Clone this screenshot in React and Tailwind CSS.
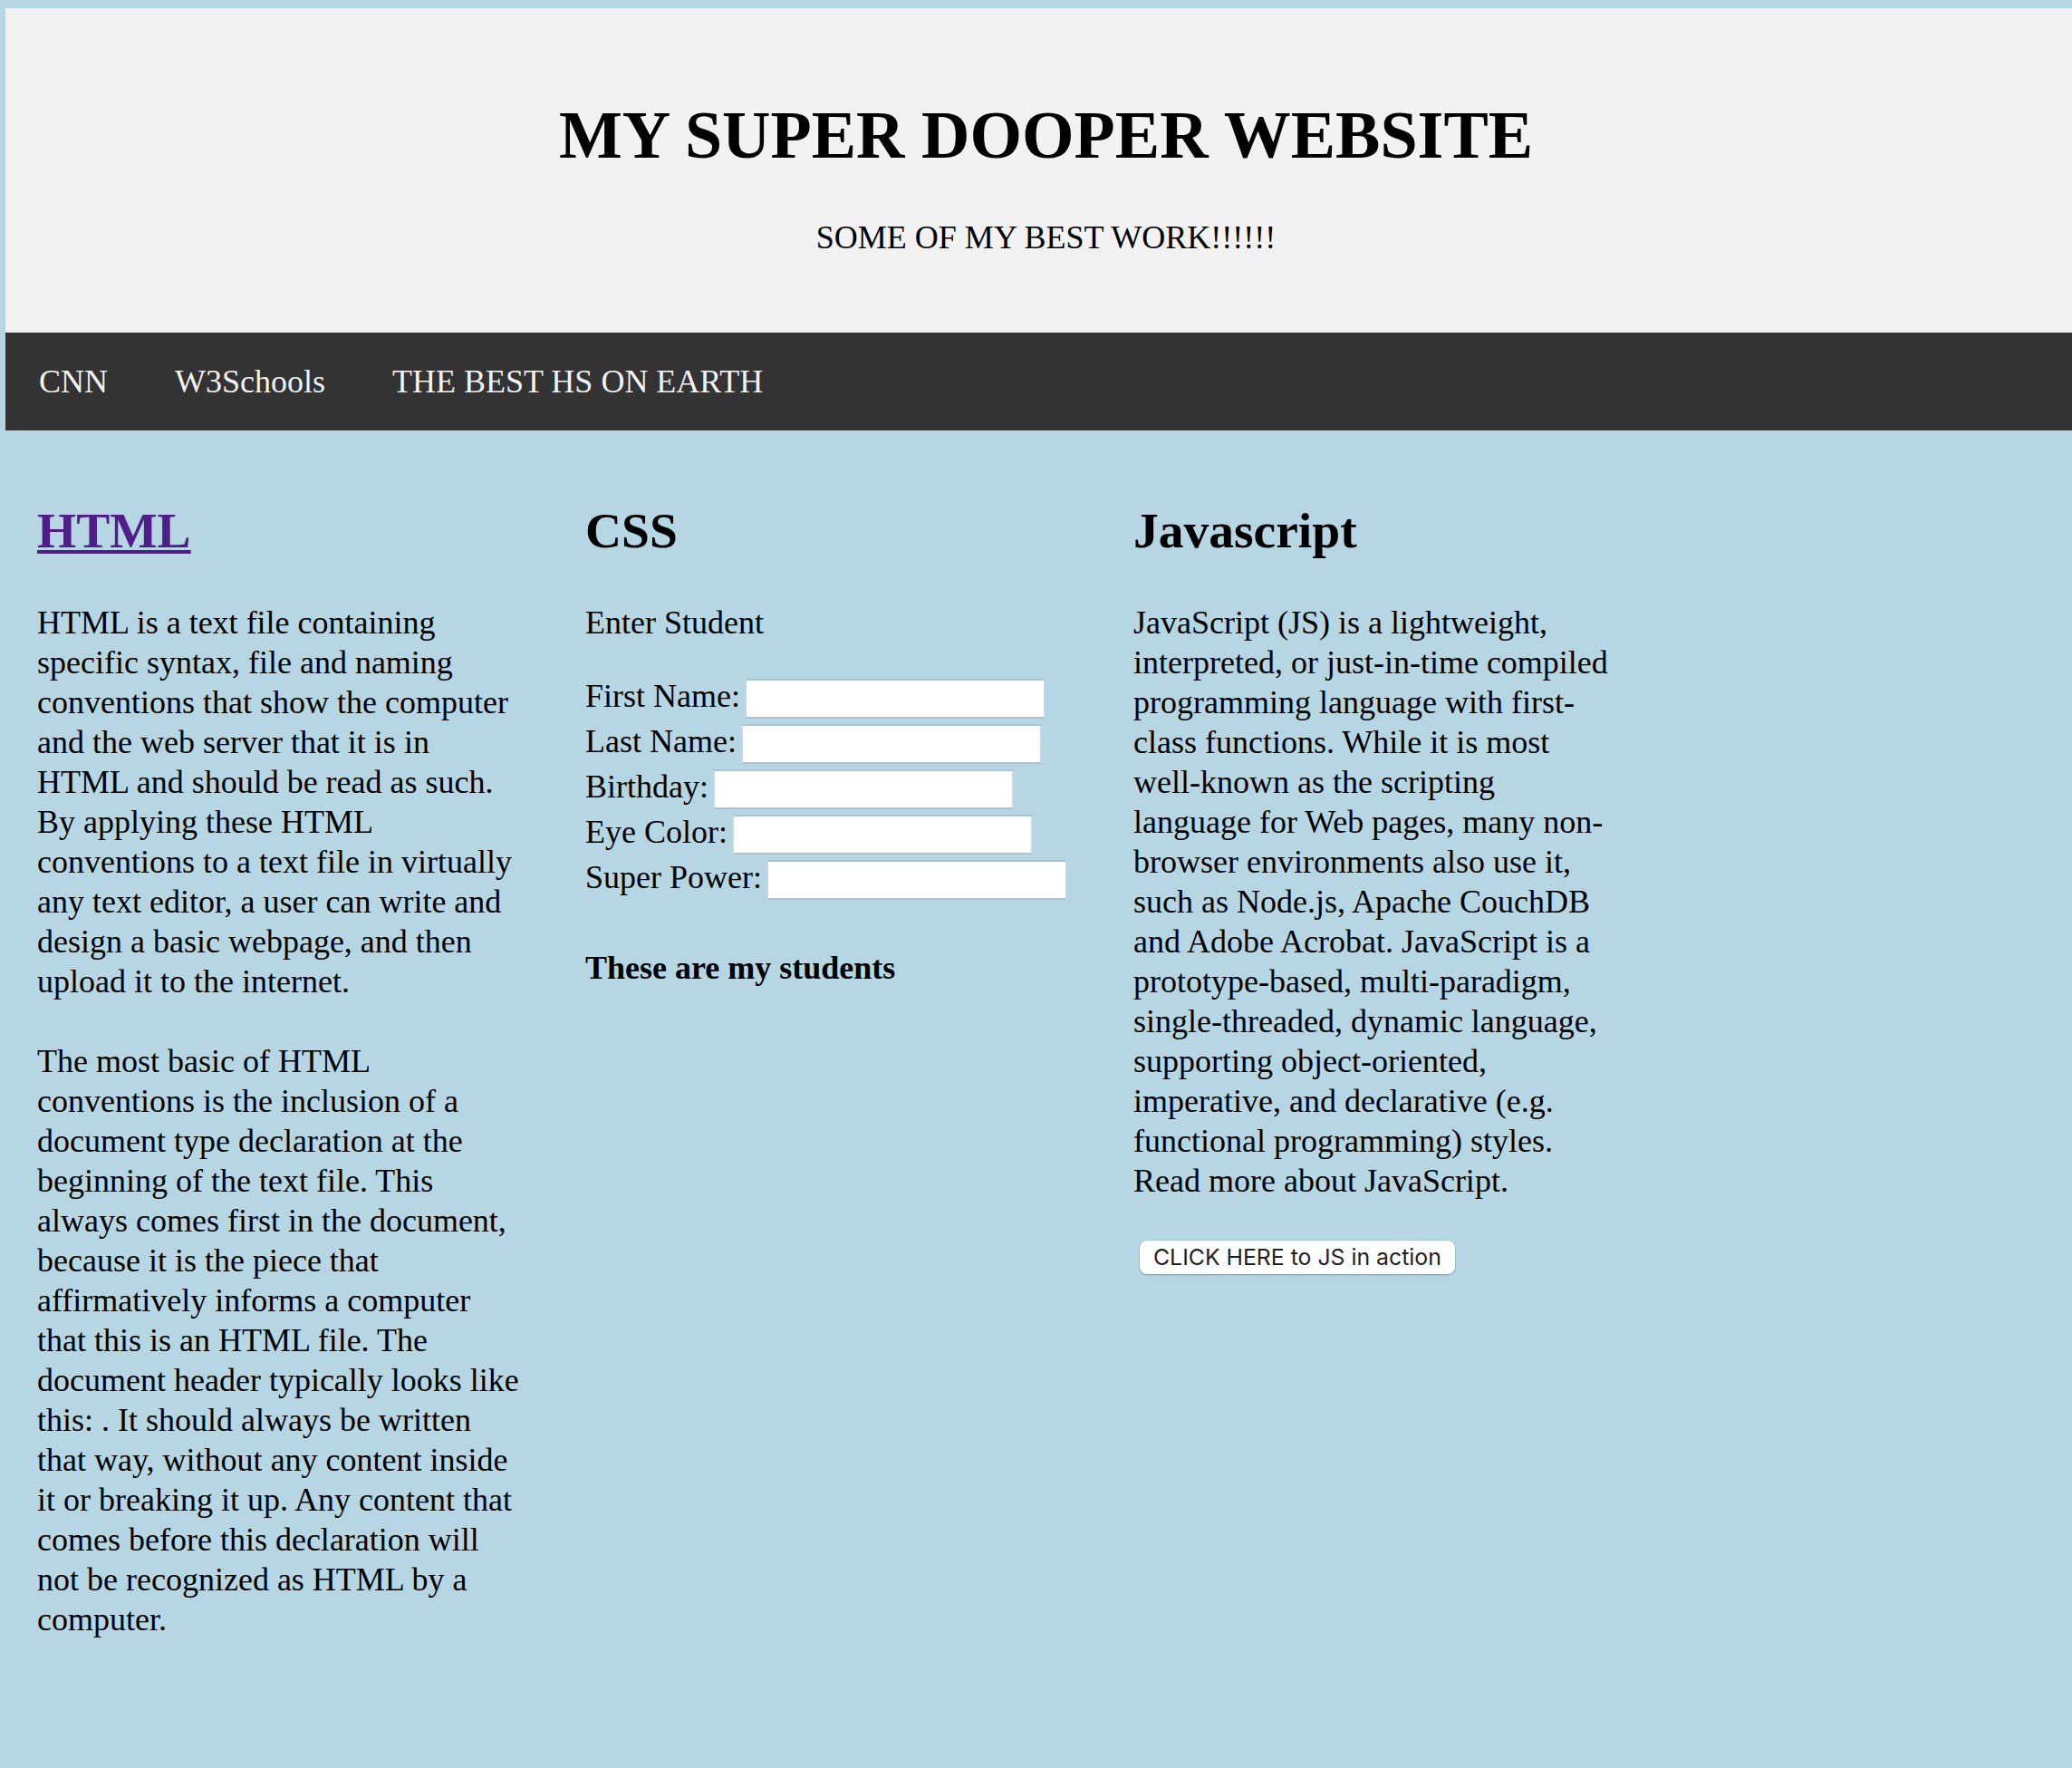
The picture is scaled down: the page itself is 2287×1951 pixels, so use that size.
const serif = "font-['Liberation_Serif','Times_New_Roman',serif]";

function Field({ label }) {
  return (
    <div className="flex items-start h-[50px]">
      <span className="leading-[50px] whitespace-nowrap">{label}</span>
      <input
        type="text"
        className="ml-[5px] mt-[6px] w-[332px] h-[44px] bg-white border-2 border-[#a9c3d1] border-x-[#c4d9e3] outline-none"
      />
    </div>
  );
}

export default function App() {
  return (
    <div className={`min-h-screen bg-[#b6d6e3] pt-[9px] pl-[6px] text-black ${serif}`}>
      {/* Header */}
      <header className="bg-[#f2f2f2] h-[358px] pt-[98px] pl-[16px] text-center">
        <h1 className="text-[74px] leading-[84px] font-bold">MY SUPER DOOPER WEBSITE</h1>
        <p className="mt-[49px] text-[36px] leading-[44px]">SOME OF MY BEST WORK!!!!!!</p>
      </header>

      {/* Nav */}
      <nav className="bg-[#333333] h-[108px] flex text-[#f2f2f2] text-[36px] leading-[108px]">
        <a href="#" className="px-[37px]">CNN</a>
        <a href="#" className="px-[37px]">W3Schools</a>
        <a href="#" className="px-[37px]">THE BEST HS ON EARTH</a>
      </nav>

      {/* Columns */}
      <main className="flex pt-[79px] pb-[40px] text-[36px] leading-[44px]">
        <section className="w-[605px] shrink-0 pl-[35px] pr-[35px]">
          <h2 className="text-[55.5px] leading-[64px] font-bold mb-[47px]">
            <a href="#" className="text-[#4f1e89] underline decoration-[4px] underline-offset-[3px]">HTML</a>
          </h2>
          <p>
            HTML is a text file containing specific syntax, file and naming conventions that show the computer and the web server that it is in HTML and should be read as such. By applying these HTML conventions to a text file in virtually any text editor, a user can write and design a basic webpage, and then upload it to the internet.
            <br />
            <br />
            The most basic of HTML conventions is the inclusion of a document type declaration at the beginning of the text file. This always comes first in the document, because it is the piece that affirmatively informs a computer that this is an HTML file. The document header typically looks like this: . It should always be written that way, without any content inside it or breaking it up. Any content that comes before this declaration will not be recognized as HTML by a computer.
          </p>
        </section>

        <section className="w-[605px] shrink-0 pl-[35px] pr-[35px]">
          <h2 className="text-[55.5px] leading-[64px] font-bold mb-[47px]">CSS</h2>
          <p>Enter Student</p>
          <form className="mt-[34px]">
            <Field label="First Name:" />
            <Field label="Last Name:" />
            <Field label="Birthday:" />
            <Field label="Eye Color:" />
            <Field label="Super Power:" />
          </form>
          <h4 className="mt-[53px] font-bold">These are my students</h4>
        </section>

        <section className="w-[605px] shrink-0 pl-[35px] pr-[35px]">
          <h2 className="text-[55.5px] leading-[64px] font-bold mb-[47px]">Javascript</h2>
          <p>
            JavaScript (JS) is a lightweight, interpreted, or just-in-time compiled programming language with first-class functions. While it is most well-known as the scripting language for Web pages, many non-browser environments also use it, such as Node.js, Apache CouchDB and Adobe Acrobat. JavaScript is a prototype-based, multi-paradigm, single-threaded, dynamic language, supporting object-oriented, imperative, and declarative (e.g. functional programming) styles. Read more about JavaScript.
          </p>
          <button
            type="button"
            className="mt-[44px] ml-[7px] h-[37px] px-[15px] rounded-[8px] bg-white text-[#222] font-['Inter',sans-serif] text-[24.8px] leading-[37px] shadow-[0_1px_2px_rgba(0,0,0,0.25),0_0_0_0.5px_rgba(0,0,0,0.12)]"
          >
            CLICK HERE to JS in action
          </button>
        </section>
      </main>
    </div>
  );
}
